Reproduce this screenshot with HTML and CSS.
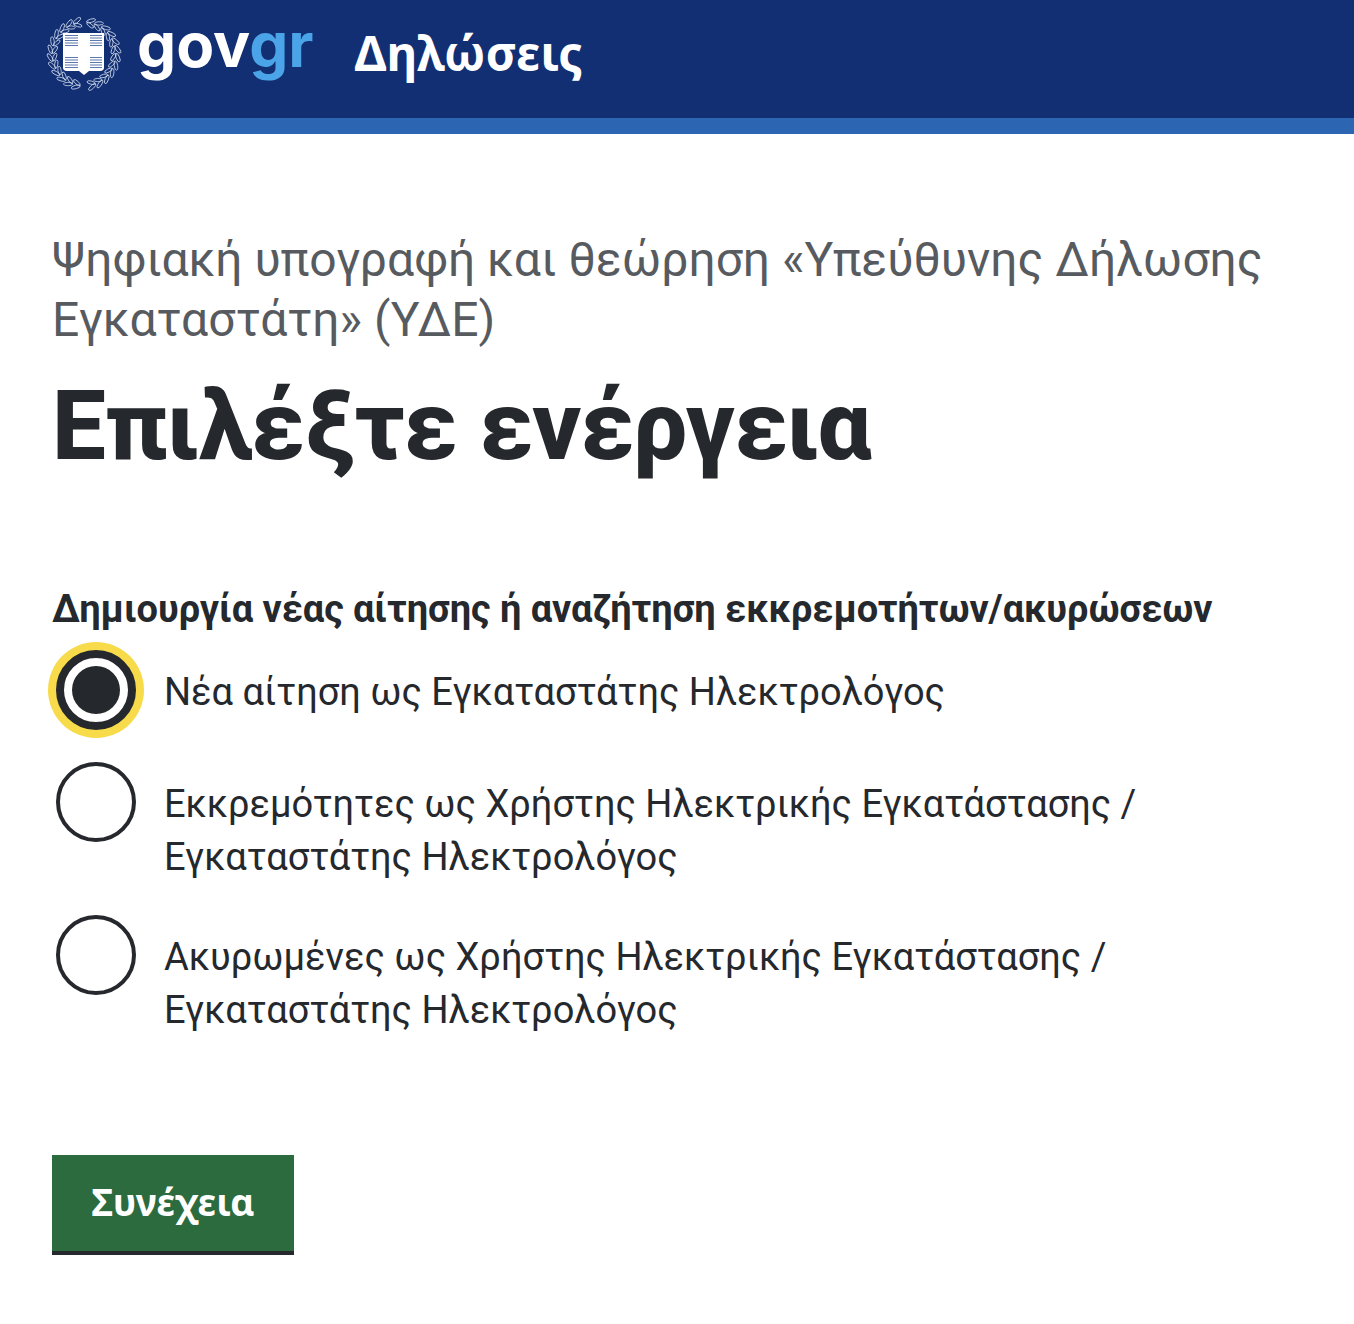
FILE: index.html
```html
<!DOCTYPE html>
<html lang="el">
<head>
    <meta charset="UTF-8">
    <meta name="viewport" content="width=device-width, initial-scale=1.0">
    <title>Δηλώσεις</title>
    <link rel="stylesheet" href="styles.css">
</head>
<body>
    <header class="site-header">
        <svg class="emblem" viewBox="0 0 76 76" aria-hidden="true">
            <defs>
                <g id="leaf">
                    <ellipse cx="38" cy="4" rx="1.7" ry="4.6" transform="rotate(62 38 4)"/>
                    <ellipse cx="38" cy="8.500" rx="1.6" ry="4.2" transform="rotate(-62 38 8.500)"/>
                </g>
            </defs>
            <g fill="none" stroke="#ccd9ec" stroke-width="0.8">
                <use href="#leaf" transform="rotate(12 38 38)"/>
                <use href="#leaf" transform="rotate(26 38 38)"/>
                <use href="#leaf" transform="rotate(40 38 38)"/>
                <use href="#leaf" transform="rotate(54 38 38)"/>
                <use href="#leaf" transform="rotate(68 38 38)"/>
                <use href="#leaf" transform="rotate(82 38 38)"/>
                <use href="#leaf" transform="rotate(96 38 38)"/>
                <use href="#leaf" transform="rotate(110 38 38)"/>
                <use href="#leaf" transform="rotate(124 38 38)"/>
                <use href="#leaf" transform="rotate(138 38 38)"/>
                <use href="#leaf" transform="rotate(152 38 38)"/>
                <use href="#leaf" transform="rotate(166 38 38)"/>
                <use href="#leaf" transform="rotate(194 38 38)"/>
                <use href="#leaf" transform="rotate(208 38 38)"/>
                <use href="#leaf" transform="rotate(222 38 38)"/>
                <use href="#leaf" transform="rotate(236 38 38)"/>
                <use href="#leaf" transform="rotate(250 38 38)"/>
                <use href="#leaf" transform="rotate(264 38 38)"/>
                <use href="#leaf" transform="rotate(278 38 38)"/>
                <use href="#leaf" transform="rotate(292 38 38)"/>
                <use href="#leaf" transform="rotate(306 38 38)"/>
                <use href="#leaf" transform="rotate(320 38 38)"/>
                <use href="#leaf" transform="rotate(334 38 38)"/>
                <use href="#leaf" transform="rotate(348 38 38)"/>
            </g>
            <path fill="#ffffff" d="M17 17h41v35c0 2-2 3-4 3H43l-5 4-5-4H21c-2 0-4-1-4-3z"/>
            <g stroke="#5c78ac" stroke-width="1.200">
                <path d="M19 19.500h13M19 22h13M19 24.500h13M19 27h13M19 29.500h13M44 19.500h12M44 22h12M44 24.500h12M44 27h12M44 29.500h12"/>
                <path d="M19 41.500h13M19 44h13M19 46.500h13M19 49h13M19 51.500h13M44 41.500h12M44 44h12M44 46.500h12M44 49h12M44 51.500h12"/>
            </g>
        </svg>
        <div class="logo-text">gov<span class="logo-accent">gr</span></div>
        <div class="site-title">Δηλώσεις</div>
    </header>

    <main class="content">
        <p class="caption">Ψηφιακή υπογραφή και θεώρηση «Υπεύθυνης Δήλωσης Εγκαταστάτη» (ΥΔΕ)</p>
        <h1>Επιλέξτε ενέργεια</h1>

        <form class="action-form">
            <div class="legend">Δημιουργία νέας αίτησης ή αναζήτηση εκκρεμοτήτων/ακυρώσεων</div>

            <div class="option">
                <span class="radio radio-selected"></span>
                <span class="option-label">Νέα αίτηση ως Εγκαταστάτης Ηλεκτρολόγος</span>
            </div>
            <div class="option">
                <span class="radio"></span>
                <span class="option-label">Εκκρεμότητες ως Χρήστης Ηλεκτρικής Εγκατάστασης / Εγκαταστάτης Ηλεκτρολόγος</span>
            </div>
            <div class="option">
                <span class="radio"></span>
                <span class="option-label">Ακυρωμένες ως Χρήστης Ηλεκτρικής Εγκατάστασης / Εγκαταστάτης Ηλεκτρολόγος</span>
            </div>

            <button type="button" class="continue-btn">Συνέχεια</button>
        </form>
    </main>
</body>
</html>
```

FILE: styles.css
```css
body {
    font-family: Roboto, "Noto Sans", sans-serif;
    background-color: #ffffff;
    color: #25282c;
    margin: 0;
}
.site-header {
    display: flex;
    align-items: center;
    height: 118px;
    padding-left: 46px;
    background-color: #132f73;
    border-bottom: 16px solid #2c66b2;
}
.emblem {
    width: 76px;
    height: 76px;
    margin-top: -10px;
}
.logo-text {
    font-family: Inter, sans-serif;
    font-weight: 700;
    font-size: 62px;
    line-height: 68px;
    color: #ffffff;
    margin-left: 15px;
    margin-top: -28px;
}
.logo-accent {
    color: #4ba3e8;
}
.site-title {
    font-family: "Noto Sans", sans-serif;
    font-weight: 700;
    font-size: 47.7px;
    color: #ffffff;
    margin-left: 41px;
    margin-top: -14px;
}
.content {
    padding: 96px 52px 0;
}
.caption {
    font-size: 48px;
    line-height: 60px;
    color: #575b60;
    margin: 0;
}
h1 {
    font-size: 96px;
    line-height: 112px;
    font-weight: 800;
    letter-spacing: -1px;
    margin: 20px 0 0;
}
.action-form {
    margin-top: 101px;
}
.legend {
    font-size: 38px;
    font-weight: 700;
    line-height: 52px;
    letter-spacing: -0.07px;
    margin-bottom: 15px;
}
.option {
    display: flex;
    align-items: flex-start;
    gap: 28px;
    margin-bottom: 32px;
    padding-left: 4px;
}
.radio {
    flex: none;
    box-sizing: border-box;
    width: 80px;
    height: 80px;
    border: 4px solid #25282c;
    border-radius: 50%;
    background-color: #ffffff;
}
.radio-selected {
    border-width: 8px;
    padding: 8px;
    box-shadow: 0 0 0 8px #f7db4a;
}
.radio-selected::after {
    content: "";
    display: block;
    width: 48px;
    height: 48px;
    border-radius: 50%;
    background-color: #25282c;
}
.option-label {
    font-size: 38px;
    line-height: 52.5px;
    padding-top: 16px;
}
.continue-btn {
    display: block;
    font-family: "Noto Sans", sans-serif;
    font-size: 37px;
    font-weight: 700;
    color: #ffffff;
    background-color: #2c6b3e;
    border: none;
    border-bottom: 4px solid #25282c;
    width: 242px;
    height: 100px;
    margin-top: 119px;
    padding: 0 0 4px;
}
```
